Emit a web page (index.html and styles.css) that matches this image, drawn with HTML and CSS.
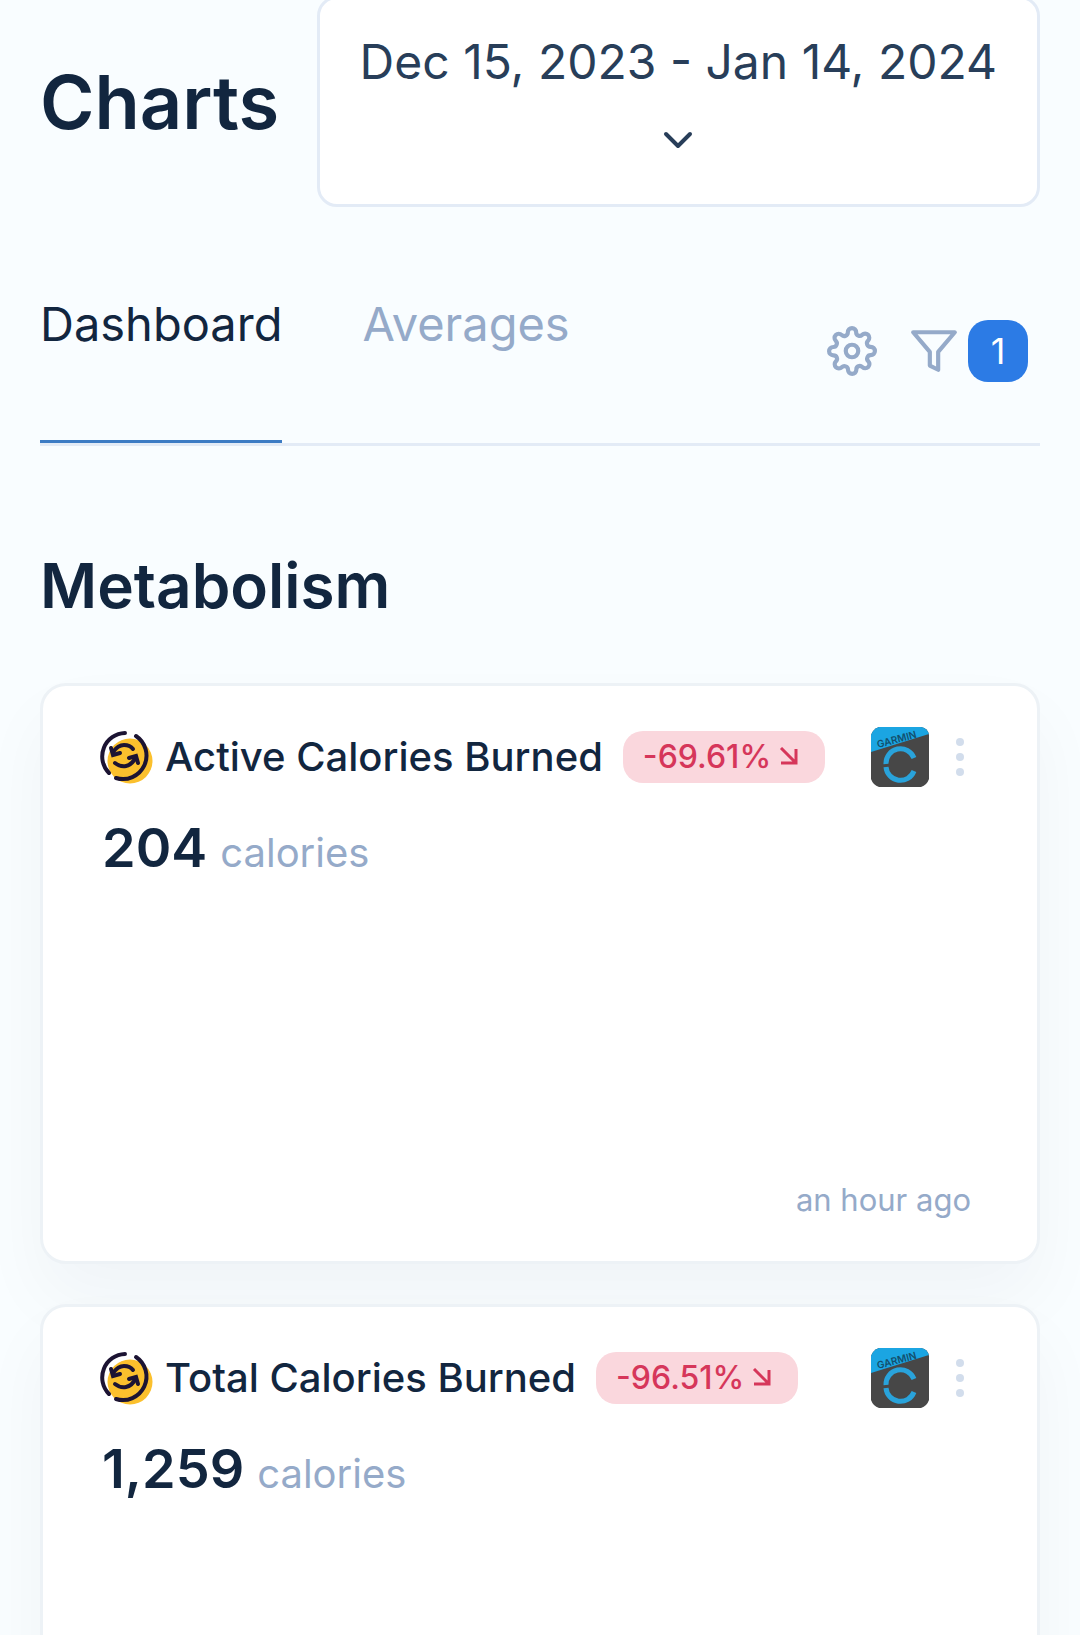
FILE: index.html
```
<!DOCTYPE html>
<html lang="en">

<head>
    <meta charset="utf-8">
    <meta name="viewport" content="width=device-width, initial-scale=1">
    <title>Charts</title>
    <link rel="stylesheet" href="styles.css">
</head>

<body>
    <!-- shared icons -->
    <svg class="sprite" aria-hidden="true">
        <symbol id="metabolism" viewBox="0 0 54 54">
            <circle cx="30" cy="31" r="22.500" fill="#fbc02d"/>
            <g fill="none" stroke="#1c1433" stroke-width="4" stroke-linecap="round">
                <path d="M25 3A23.500 23.500 0 0 0 9 43"/>
                <path d="M36 6A23.500 23.500 0 0 1 16 48"/>
                <path d="M13 22Q18 15 24 15T33 19"/>
                <path d="M11 18L13 25L20 23"/>
                <path d="M15 33Q20 37 26 36T36 27"/>
                <path d="M29 28L36 26L38 33"/>
            </g>
        </symbol>
        <symbol id="garmin" viewBox="0 0 58 60">
            <path d="M8 0H50Q57 1 58 8V52Q56 58 50 60H8Q2 58 0 52V8Q2 2 8 0Z" fill="#474747"/>
            <path d="M8 0H50Q56 1 58 7L0 25V8Q2 2 8 0Z" fill="#1ba5e2"/>
            <text x="7" y="21" transform="rotate(-15 7 21)" class="garmin-text">GARMIN</text>
            <g fill="none" stroke="#29a3db" stroke-width="5">
                <path d="M43 31A14.500 14.500 0 0 0 15 37"/>
                <path d="M15 40A14.500 14.500 0 0 0 43 44"/>
            </g>
        </symbol>
        <symbol id="down-right" viewBox="0 0 20 20">
            <path d="M2 1L17 16M17 2V16H2" fill="none" stroke="currentColor" stroke-width="3"/>
        </symbol>
        <symbol id="dots" viewBox="0 0 10 40">
            <circle cx="5" cy="5" r="4"/>
            <circle cx="5" cy="20" r="4"/>
            <circle cx="5" cy="35" r="4"/>
        </symbol>
    </svg>

    <div class="page">
        <header class="header">
            <h1>Charts</h1>
            <button type="button" class="date-range">
                <span>Dec 15, 2023 - Jan 14, 2024</span>
                <svg class="chevron" viewBox="0 0 28 18" aria-hidden="true">
                    <path d="M2 3L14 15L26 3"/>
                </svg>
            </button>
        </header>

        <nav class="tabs">
            <a href="#dashboard" class="tab active">Dashboard</a>
            <a href="#averages" class="tab">Averages</a>
            <div class="tools">
                <button type="button" class="icon-btn" aria-label="Settings">
                    <svg class="icon" viewBox="0 0 24 24">
                        <circle cx="12" cy="12" r="3"/>
                        <path d="M19.400 15a1.650 1.650 0 0 0 .33 1.820l.06.06a2 2 0 0 1 0 2.830 2 2 0 0 1-2.830 0l-.06-.06a1.650 1.650 0 0 0-1.820-.33 1.650 1.650 0 0 0-1 1.510V21a2 2 0 0 1-2 2 2 2 0 0 1-2-2v-.09A1.650 1.650 0 0 0 9 19.400a1.650 1.650 0 0 0-1.820.33l-.06.06a2 2 0 0 1-2.830 0 2 2 0 0 1 0-2.830l.06-.06a1.650 1.650 0 0 0 .33-1.820 1.650 1.650 0 0 0-1.510-1H3a2 2 0 0 1-2-2 2 2 0 0 1 2-2h.09A1.650 1.650 0 0 0 4.600 9a1.650 1.650 0 0 0-.33-1.820l-.06-.06a2 2 0 0 1 0-2.830 2 2 0 0 1 2.830 0l.06.06a1.650 1.650 0 0 0 1.820.33H9a1.650 1.650 0 0 0 1-1.510V3a2 2 0 0 1 2-2 2 2 0 0 1 2 2v.09a1.650 1.650 0 0 0 1 1.510 1.650 1.650 0 0 0 1.820-.33l.06-.06a2 2 0 0 1 2.830 0 2 2 0 0 1 0 2.830l-.06.06a1.650 1.650 0 0 0-.33 1.820V9a1.650 1.650 0 0 0 1.510 1H21a2 2 0 0 1 2 2 2 2 0 0 1-2 2h-.09a1.650 1.650 0 0 0-1.510 1z"/>
                    </svg>
                </button>
                <button type="button" class="icon-btn filter" aria-label="Filters, 1 active">
                    <svg class="icon" viewBox="0 0 24 24">
                        <path d="M22 3H2l8 9.460V19l4 2v-8.540z"/>
                    </svg>
                    <span class="count">1</span>
                </button>
            </div>
        </nav>

        <main>
            <h2>Metabolism</h2>

            <section class="card">
                <div class="card-header">
                    <svg class="metric-icon" aria-hidden="true"><use href="#metabolism"/></svg>
                    <h3>Active Calories Burned</h3>
                    <span class="change">-69.61%<svg class="arrow" aria-hidden="true"><use href="#down-right"/></svg></span>
                    <svg class="source" role="img" aria-label="Garmin"><use href="#garmin"/></svg>
                    <button type="button" class="menu" aria-label="More"><svg><use href="#dots"/></svg></button>
                </div>
                <p class="value"><strong>204</strong> <span>calories</span></p>
                <p class="updated">an hour ago</p>
            </section>

            <section class="card">
                <div class="card-header">
                    <svg class="metric-icon" aria-hidden="true"><use href="#metabolism"/></svg>
                    <h3>Total Calories Burned</h3>
                    <span class="change">-96.51%<svg class="arrow" aria-hidden="true"><use href="#down-right"/></svg></span>
                    <svg class="source" role="img" aria-label="Garmin"><use href="#garmin"/></svg>
                    <button type="button" class="menu" aria-label="More"><svg><use href="#dots"/></svg></button>
                </div>
                <p class="value"><strong>1,259</strong> <span>calories</span></p>
            </section>
        </main>
    </div>
</body>

</html>
```
FILE: styles.css
```
* {
    box-sizing: border-box;
}

body {
    margin: 0;
    background-color: #f9fdff;
    color: #12263f;
    font-family: Inter, "Liberation Sans", sans-serif;
}

h1, h2, h3, p {
    margin: 0;
}

button {
    font: inherit;
    color: inherit;
    background: none;
    border: 0;
    padding: 0;
    cursor: pointer;
}

.sprite {
    display: none;
}

.page {
    height: 100vh;
    overflow: hidden;
    padding: 0 40px;
}

.header {
    display: flex;
    align-items: center;
    justify-content: space-between;
    gap: 32px;
    margin-top: -4px;
}

h1 {
    font-size: 74px;
    line-height: 90px;
    font-weight: 600;
}

.date-range {
    display: flex;
    flex-direction: column;
    align-items: center;
    gap: 34px;
    padding: 28px 40px 55px;
    border: 3px solid #e3ebf6;
    border-radius: 20px;
    background-color: #fff;
    color: #283e59;
    font-size: 48px;
    line-height: 70px;
    white-space: nowrap;
}

.chevron {
    width: 30px;
    height: 18px;
    fill: none;
    stroke: currentColor;
    stroke-width: 4;
    stroke-linecap: round;
    stroke-linejoin: round;
}

.tabs {
    display: flex;
    gap: 80px;
    margin-top: 71px;
    border-bottom: 3px solid #e3ebf6;
}

.tab {
    padding: 11px 0 81px;
    border-bottom: 3px solid transparent;
    color: #95aac9;
    font-size: 47px;
    line-height: 70px;
    text-decoration: none;
}

.tab.active {
    border-color: #3d7cc4;
    color: #12263f;
}

.tools {
    display: flex;
    align-items: center;
    gap: 32px;
    height: 62px;
    margin: 42px 12px 0 auto;
    color: #95aac9;
}

.icon-btn {
    display: flex;
    align-items: center;
    gap: 9px;
}

.icon {
    width: 50px;
    height: 50px;
    fill: none;
    stroke: currentColor;
    stroke-width: 2;
    stroke-linecap: round;
    stroke-linejoin: round;
}

.count {
    width: 60px;
    border-radius: 20px;
    background-color: #2c7be5;
    color: #fff;
    font-size: 36px;
    line-height: 62px;
    text-align: center;
}

h2 {
    margin: 101px 0 58px;
    font-size: 62px;
    line-height: 78px;
    font-weight: 600;
}

.card {
    display: flex;
    flex-direction: column;
    min-height: 581px;
    margin-bottom: 40px;
    padding: 41px 66px 39px 57px;
    border: 3px solid #edf2f6;
    border-radius: 26px;
    background-color: #fff;
    box-shadow: 0 35px 70px rgba(18, 38, 63, 0.04);
}

.card-header {
    display: flex;
    align-items: center;
    height: 60px;
}

.metric-icon {
    width: 54px;
    height: 54px;
}

h3 {
    margin: 0 20px 0 11px;
    font-size: 40px;
    line-height: 52px;
    font-weight: 500;
    white-space: nowrap;
}

.change {
    display: flex;
    align-items: center;
    gap: 8px;
    padding: 0 26px 0 20px;
    border-radius: 20px;
    background-color: #fad7dd;
    color: #d6365a;
    font-size: 32px;
    line-height: 52px;
    font-weight: 500;
}

.arrow {
    width: 20px;
    height: 20px;
}

.source {
    width: 58px;
    height: 60px;
    margin-left: auto;
}

.garmin-text {
    fill: #12506e;
    font-size: 10px;
    font-weight: 600;
}

.menu {
    display: flex;
    margin: 0 6px 0 26px;
}

.menu svg {
    width: 10px;
    height: 40px;
    fill: #d2ddec;
}

.value {
    display: flex;
    align-items: baseline;
    gap: 13px;
    margin-top: 28px;
    padding-left: 2px;
    line-height: 66px;
}

.value strong {
    font-size: 54px;
    font-weight: 600;
}

.value span {
    color: #95aac9;
    font-size: 40px;
}

.updated {
    margin-top: auto;
    color: #95aac9;
    font-size: 31px;
    line-height: 44px;
    text-align: right;
}
```
